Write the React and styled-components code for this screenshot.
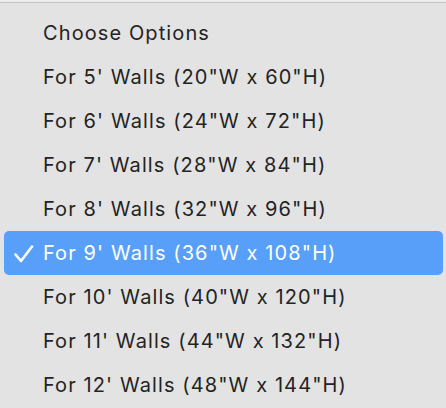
import React from 'react'
import styled, { createGlobalStyle } from 'styled-components'

const GlobalStyle = createGlobalStyle`
  html, body {
    margin: 0;
    padding: 0;
    background: #e3e3e3;
  }
  body {
    font-family: Inter, "Liberation Sans", Arial, sans-serif;
    -webkit-font-smoothing: antialiased;
  }
`

const Page = styled.div`
  width: 446px;
  height: 408px;
  overflow: hidden;
  background: #e3e3e3;
  display: flex;
  flex-direction: column;
`

const TopEdge = styled.div`
  height: 2px;
  background: #ececec;
  border-bottom: 1px solid #c4c4c4;
  flex-shrink: 0;
`

const Menu = styled.ul`
  list-style: none;
  margin: 0;
  padding: 8px 3px 0 4px;
  display: flex;
  flex-direction: column;
`

const Item = styled.li`
  height: 44px;
  display: flex;
  align-items: center;
  padding-left: 10px;
  border-radius: 5px;
  background: ${props => props.selected ? '#589ffa' : 'transparent'};
  color: ${props => props.selected ? '#ffffff' : '#232323'};
  font-size: 20px;
  letter-spacing: 1.1px;
`

const CheckSlot = styled.span`
  width: 29px;
  display: flex;
  align-items: center;
  flex-shrink: 0;
  padding-top: 2px;
`

const Label = styled.span`
  white-space: nowrap;
`

const options = [
  'Choose Options',
  'For 5\' Walls (20"W x 60"H)',
  'For 6\' Walls (24"W x 72"H)',
  'For 7\' Walls (28"W x 84"H)',
  'For 8\' Walls (32"W x 96"H)',
  'For 9\' Walls (36"W x 108"H)',
  'For 10\' Walls (40"W x 120"H)',
  'For 11\' Walls (44"W x 132"H)',
  'For 12\' Walls (48"W x 144"H)'
]

const Check = () => (
  <svg width="20" height="18" viewBox="0 0 20 18">
    <path d="M1.5 9.5 L7 16 L18 1.5" fill="none" stroke="#ffffff" strokeWidth="2.6" strokeLinecap="round" strokeLinejoin="round" />
  </svg>
)

export default function App () {
  const selected = 5

  return (
    <Page>
      <GlobalStyle />
      <TopEdge />
      <Menu>
        {options.map((text, i) => (
          <Item key={text} selected={i === selected}>
            <CheckSlot>{i === selected && <Check />}</CheckSlot>
            <Label>{text}</Label>
          </Item>
        ))}
      </Menu>
    </Page>
  )
}
